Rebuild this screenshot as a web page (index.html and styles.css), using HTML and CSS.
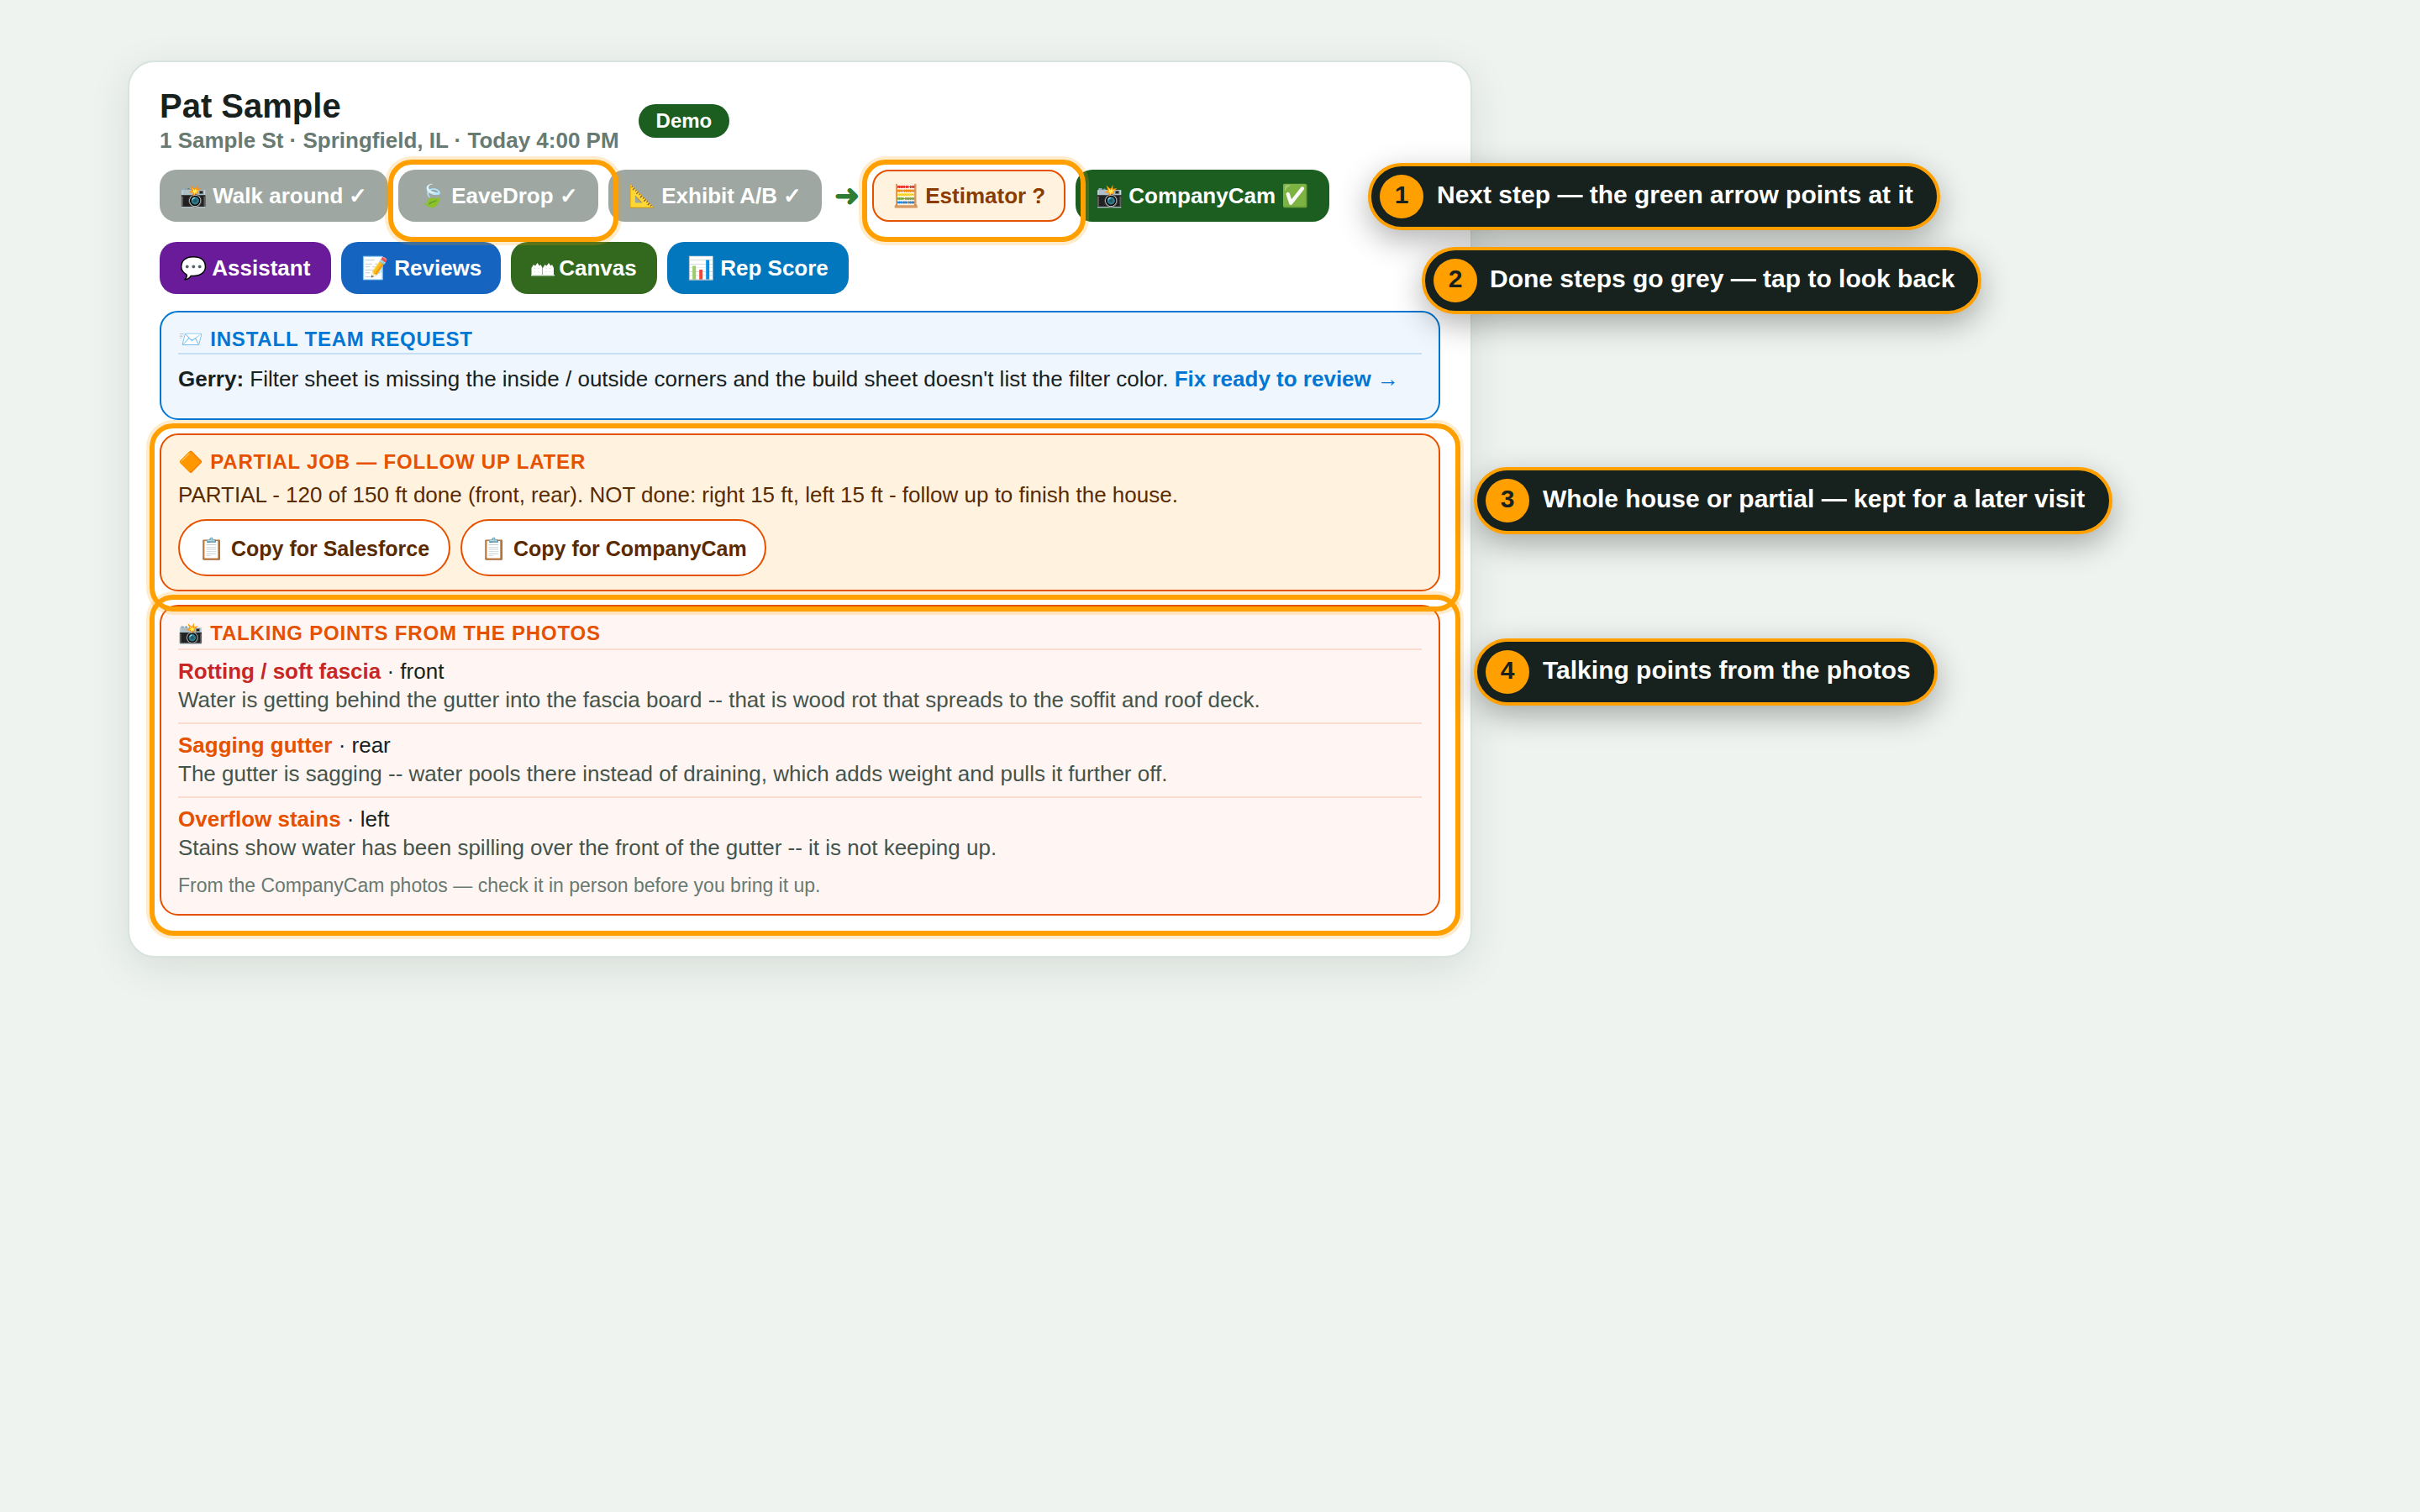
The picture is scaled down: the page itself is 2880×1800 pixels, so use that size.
FILE: index.html
```html
<!DOCTYPE html>
<html lang="en">
<head>
<meta charset="utf-8">
<title>Pat Sample</title>
<link rel="stylesheet" href="styles.css">
</head>
<body>
<main class="card">
  <header class="head">
    <div>
      <h1 class="name">Pat Sample</h1>
      <p class="meta">1 Sample St · Springfield, IL · Today 4:00 PM</p>
    </div>
    <span class="tag">Demo</span>
  </header>

  <nav class="row">
    <a class="btn done walk">📸 Walk around ✓</a>
    <a class="btn done eave ringed">🍃 EaveDrop ✓<i class="ring"></i></a>
    <a class="btn done exhibit">📐 Exhibit A/B ✓</a>
    <span class="arrow">➜</span>
    <a class="btn next ringed">🧮 Estimator ?<i class="ring"></i></a>
    <a class="btn cam">📸 CompanyCam ✅</a>
  </nav>
  <nav class="row">
    <a class="btn assistant">💬 Assistant</a>
    <a class="btn reviews">📝 Reviews</a>
    <a class="btn canvas"><svg class="houses" viewBox="0 0 28 16" aria-hidden="true"><path fill="#fff" d="M.5 14V6L3 2l2 1.500L7.500 0 10 3.500 11.500 2 13.500 6v8zM14 14V6l2.500-4 2 1.500L21 0l2.500 3.500L25 2l2 4v8z"/><path fill="#dde6da" d="M0 14h28v1.500H0z"/><path fill="#c5d3be" d="M4 6h1v1H4zM8.500 6h1v1h-1zM17.500 6h1v1h-1zM22 6h1v1h-1zM4 10h1v1H4zM8.500 10h1v1h-1zM17.500 10h1v1h-1zM22 10h1v1h-1z"/></svg> Canvas</a>
    <a class="btn score">📊 Rep Score</a>
  </nav>

  <section class="panel install">
    <h2 class="title">📨 Install team request</h2>
    <p class="request"><b>Gerry:</b> Filter sheet is missing the inside / outside corners and the build sheet doesn't list the filter color. <b class="link">Fix ready to review →</b></p>
  </section>

  <section class="panel partial ringed">
    <h2 class="title">🔶 Partial job — follow up later</h2>
    <p class="summary">PARTIAL - 120 of 150 ft done (front, rear). NOT done: right 15 ft, left 15 ft - follow up to finish the house.</p>
    <div class="copies">
      <a class="copy salesforce"><span class="clip">📋</span> Copy for Salesforce</a>
      <a class="copy companycam"><span class="clip">📋</span> Copy for CompanyCam</a>
    </div>
    <i class="ring"></i>
  </section>

  <section class="panel talking ringed">
    <h2 class="title">📸 Talking points from the photos</h2>
    <div class="point"><p><b class="severe">Rotting / soft fascia</b> · front</p><p class="why">Water is getting behind the gutter into the fascia board -- that is wood rot that spreads to the soffit and roof deck.</p></div>
    <div class="point"><p><b>Sagging gutter</b> · rear</p><p class="why">The gutter is sagging -- water pools there instead of draining, which adds weight and pulls it further off.</p></div>
    <div class="point"><p><b>Overflow stains</b> · left</p><p class="why">Stains show water has been spilling over the front of the gutter -- it is not keeping up.</p></div>
    <p class="note">From the CompanyCam photos — check it in person before you bring it up.</p>
    <i class="ring"></i>
  </section>
</main>

<div class="callout c1"><span class="num">1</span><span class="label">Next step — the green arrow points at it</span></div>
<div class="callout c2"><span class="num">2</span><span class="label">Done steps go grey — tap to look back</span></div>
<div class="callout c3"><span class="num">3</span><span class="label">Whole house or partial — kept for a later visit</span></div>
<div class="callout c4"><span class="num">4</span><span class="label">Talking points from the photos</span></div>
</body>
</html>
```
FILE: styles.css
```css
* { box-sizing: border-box; }
body {
  margin: 0;
  padding: 72px 152px;
  min-height: 1800px;
  background: #eef3ef;
  color: #17211d;
  font-family: "Liberation Sans", Arial, sans-serif;
  font-size: 26px;
}
h1, h2, p { margin: 0; }

.card {
  width: 1600px;
  height: 1068px;
  padding: 27px 36px 0;
  background: #fff;
  border: 2px solid #d9e3dd;
  border-radius: 32px;
  box-shadow: 0 12px 48px rgba(20, 40, 30, .1);
}

.head { display: flex; align-items: center; gap: 23px; height: 101px; padding-bottom: 15px; }
.name { margin-bottom: 4px; font-size: 40px; line-height: 42px; }
.meta { color: #687a72; font-weight: 700; line-height: 32px; }
.tag {
  height: 40px;
  padding: 0 21px;
  border-radius: 20px;
  background: #1b5e20;
  color: #fff;
  font-size: 24px;
  font-weight: 700;
  line-height: 40px;
}

.row { display: flex; gap: 12px; height: 62px; margin-bottom: 24px; }
.btn {
  height: 62px;
  padding: 0 0 0 22px;
  border: 2px solid transparent;
  border-radius: 20px;
  color: #fff;
  font-weight: 700;
  line-height: 58px;
  white-space: nowrap;
}
.done { background-color: #9ea7a1; }
.walk { width: 272px; }
.eave { width: 238px; }
.exhibit { width: 254px; }
.next { width: 230px; background-color: #fff3e0; border-color: #e65100; color: #8a3c00; }
.cam { width: 302px; background-color: #1b5e20; }
.assistant { width: 204px; background-color: #6a1b9a; }
.reviews { width: 190px; background-color: #1565c0; }
.canvas { width: 174px; background-color: #33691e; }
.score { width: 216px; background-color: #0277bd; }
.houses { width: 28px; height: 16px; margin-right: -2px; vertical-align: -1px; }
.arrow { width: 36px; color: #2e7d32; font-size: 36px; font-weight: 700; line-height: 62px; text-align: center; }

.ringed { position: relative; }
.ring {
  position: absolute;
  z-index: 1;
  inset: -14px -26px -26px -14px;
  border: 6px solid #ffa000;
  border-radius: 28px;
  box-shadow: 0 0 0 4px rgba(255, 160, 0, .2);
}

.panel { margin-bottom: 16px; padding: 0 20px; border: 2px solid #e65100; border-radius: 22px; }
.title {
  color: #e65100;
  font-size: 24px;
  line-height: 28px;
  letter-spacing: .8px;
  text-transform: uppercase;
}
.install { height: 130px; margin-top: -4px; padding-top: 18px; border-color: #0176d3; background: #eff6fd; }
.install .title { height: 32px; border-bottom: 2px solid #c5dff4; color: #0176d3; }
.request { padding-top: 12px; line-height: 34px; }
.link { color: #0176d3; }

.partial { height: 188px; padding-top: 18px; background: #fff3e0; }
.summary { margin-top: 7px; color: #5a2a00; line-height: 36px; }
.copies { display: flex; gap: 12px; margin-top: 11px; }
.copy {
  height: 68px;
  padding: 0 0 0 22px;
  border: 2px solid #e65100;
  border-radius: 34px;
  background: #fff;
  color: #5a2a00;
  font-size: 25px;
  font-weight: 700;
  line-height: 66px;
  white-space: nowrap;
}
.salesforce { width: 324px; }
.companycam { width: 364px; }
.clip { margin-right: 1px; }

.talking { height: 370px; padding-top: 18px; background: #fff6f3; }
.point { height: 88px; padding-top: 8px; border-top: 2px solid #fbdccf; line-height: 34px; }
.talking .title { height: 32px; }
.point b { color: #e65100; }
.point .severe { color: #c62828; }
.why { color: #44544c; }
.note { margin-top: 1px; color: #687a72; font-size: 23px; line-height: 34px; }

.callout {
  position: absolute;
  z-index: 2;
  display: flex;
  align-items: center;
  gap: 16px;
  height: 80px;
  padding: 0 28px 0 10px;
  border: 4px solid #ffa000;
  border-radius: 40px;
  background: #17211d;
  box-shadow: 0 12px 36px rgba(0, 0, 0, .3);
  color: #fff;
  font-size: 30px;
  font-weight: 700;
  white-space: nowrap;
}
.num {
  width: 52px;
  height: 52px;
  border-radius: 50%;
  background: #ffa000;
  color: #17211d;
  line-height: 48px;
  text-align: center;
}
.label { height: 52px; line-height: 48px; }
.c1 { left: 1628px; top: 194px; }
.c2 { left: 1692px; top: 294px; gap: 15px; }
.c3 { left: 1754px; top: 556px; padding-right: 29px; }
.c4 { left: 1754px; top: 760px; }
```
